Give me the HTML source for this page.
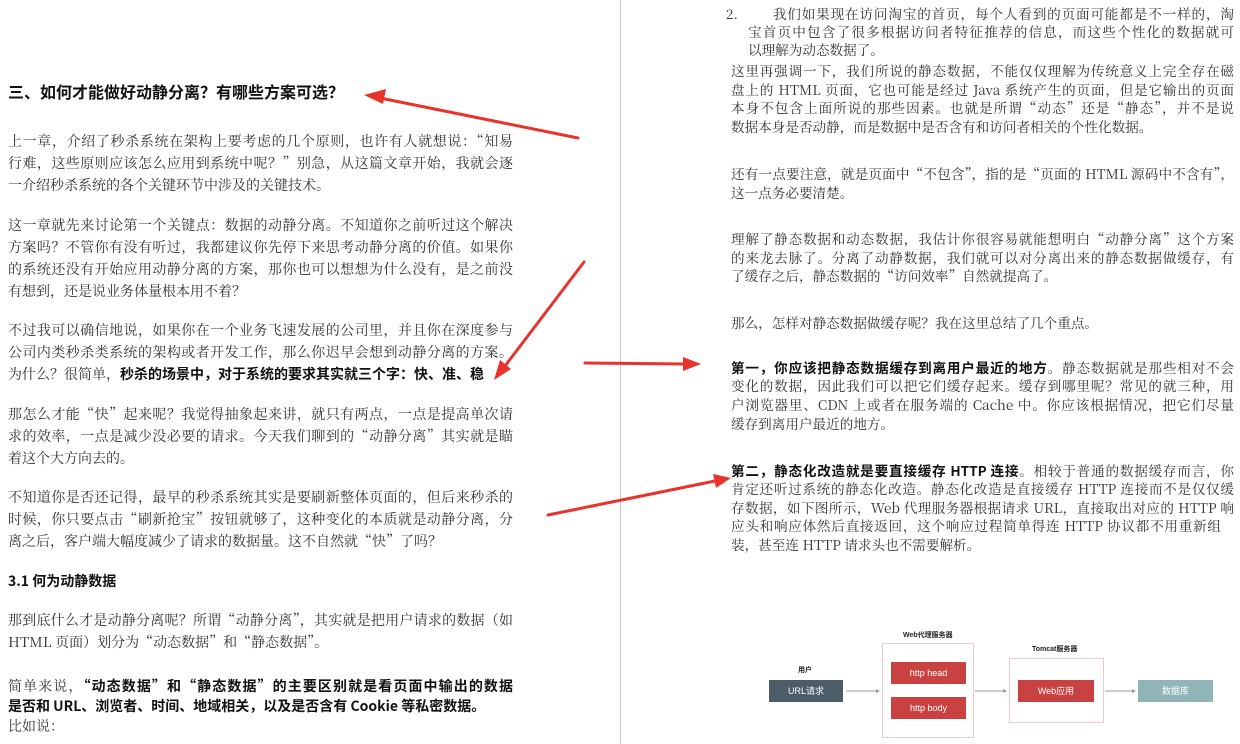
<!DOCTYPE html>
<html><head><meta charset="utf-8"><style>
body{margin:0;width:1240px;height:744px;background:#fff;position:relative;overflow:hidden;font-family:"Noto Serif CJK SC","Liberation Serif",serif;color:#333;}
.l{position:absolute;left:8px;width:505px;font-size:14px;line-height:20px;white-space:nowrap;margin-top:-2px;}
.j{text-align:justify;text-align-last:justify;}
.r{position:absolute;left:731px;width:503px;font-size:13.6px;line-height:18px;white-space:nowrap;margin-top:-2px;}
b{color:#111;font-family:"Noto Sans CJK SC","Liberation Sans",sans-serif;}
.box{position:absolute;font-family:"Liberation Sans","Noto Sans CJK SC",sans-serif;font-size:9px;color:#fff;text-align:center;line-height:22px;}
.lab{position:absolute;font-family:"Liberation Sans","Noto Sans CJK SC",sans-serif;font-size:7px;color:#222;font-weight:bold;}
</style></head><body>
<div style="position:absolute;left:620px;top:0;width:1px;height:744px;background:#c8c8c8"></div>

<div class="l" style="top:82px;font-size:16px;line-height:22px"><b>三、如何才能做好动静分离？有哪些方案可选？</b></div>
<div class="l j" style="top:133px">上一章，介绍了秒杀系统在架构上要考虑的几个原则，也许有人就想说：“知易</div>
<div class="l j" style="top:155px">行难，这些原则应该怎么应用到系统中呢？”别急，从这篇文章开始，我就会逐</div>
<div class="l" style="top:177px">一介绍秒杀系统的各个关键环节中涉及的关键技术。</div>
<div class="l j" style="top:217px">这一章就先来讨论第一个关键点：数据的动静分离。不知道你之前听过这个解决</div>
<div class="l j" style="top:239px">方案吗？不管你有没有听过，我都建议你先停下来思考动静分离的价值。如果你</div>
<div class="l j" style="top:261px">的系统还没有开始应用动静分离的方案，那你也可以想想为什么没有，是之前没</div>
<div class="l" style="top:283px">有想到，还是说业务体量根本用不着？</div>
<div class="l j" style="top:322px">不过我可以确信地说，如果你在一个业务飞速发展的公司里，并且你在深度参与</div>
<div class="l j" style="top:344px">公司内类秒杀类系统的架构或者开发工作，那么你迟早会想到动静分离的方案。</div>
<div class="l" style="top:366px">为什么？很简单，<b>秒杀的场景中，对于系统的要求其实就三个字：快、准、稳</b></div>
<div class="l j" style="top:406px">那怎么才能“快”起来呢？我觉得抽象起来讲，就只有两点，一点是提高单次请</div>
<div class="l j" style="top:428px">求的效率，一点是减少没必要的请求。今天我们聊到的“动静分离”其实就是瞄</div>
<div class="l" style="top:450px">着这个大方向去的。</div>
<div class="l j" style="top:489px">不知道你是否还记得，最早的秒杀系统其实是要刷新整体页面的，但后来秒杀的</div>
<div class="l j" style="top:511px">时候，你只要点击“刷新抢宝”按钮就够了，这种变化的本质就是动静分离，分</div>
<div class="l" style="top:533px">离之后，客户端大幅度减少了请求的数据量。这不自然就“快”了吗？</div>
<div class="l" style="top:573px"><b>3.1 何为动静数据</b></div>
<div class="l j" style="top:612px">那到底什么才是动静分离呢？所谓“动静分离”，其实就是把用户请求的数据（如</div>
<div class="l" style="top:634px">HTML 页面）划分为“动态数据”和“静态数据”。</div>
<div class="l j" style="top:678px">简单来说，<b>“动态数据”和“静态数据”的主要区别就是看页面中输出的数据</b></div>
<div class="l" style="top:698px"><b>是否和 URL、浏览者、时间、地域相关，以及是否含有 Cookie 等私密数据。</b></div>
<div class="l" style="top:718px">比如说：</div>

<div class="r j" style="top:6px;left:726px;width:508px"><span style="display:inline-block;width:46px">2.</span>我们如果现在访问淘宝的首页，每个人看到的页面可能都是不一样的，淘</div>
<div class="r j" style="top:24px;left:748px;width:486px">宝首页中包含了很多根据访问者特征推荐的信息，而这些个性化的数据就可</div>
<div class="r" style="top:42px;left:748px">以理解为动态数据了。</div>
<div class="r j" style="top:63px">这里再强调一下，我们所说的静态数据，不能仅仅理解为传统意义上完全存在磁</div>
<div class="r j" style="top:82px">盘上的 HTML 页面，它也可能是经过 Java 系统产生的页面，但是它输出的页面</div>
<div class="r j" style="top:100px">本身不包含上面所说的那些因素。也就是所谓“动态”还是“静态”，并不是说</div>
<div class="r" style="top:119px">数据本身是否动静，而是数据中是否含有和访问者相关的个性化数据。</div>
<div class="r j" style="top:166px">还有一点要注意，就是页面中“不包含”，指的是“页面的 HTML 源码中不含有”，</div>
<div class="r" style="top:185px">这一点务必要清楚。</div>
<div class="r j" style="top:231px">理解了静态数据和动态数据，我估计你很容易就能想明白“动静分离”这个方案</div>
<div class="r j" style="top:250px">的来龙去脉了。分离了动静数据，我们就可以对分离出来的静态数据做缓存，有</div>
<div class="r" style="top:268px">了缓存之后，静态数据的“访问效率”自然就提高了。</div>
<div class="r" style="top:315px">那么，怎样对静态数据做缓存呢？我在这里总结了几个重点。</div>
<div class="r j" style="top:360px"><b>第一，你应该把静态数据缓存到离用户最近的地方</b>。静态数据就是那些相对不会</div>
<div class="r j" style="top:378px">变化的数据，因此我们可以把它们缓存起来。缓存到哪里呢？常见的就三种，用</div>
<div class="r j" style="top:397px">户浏览器里、CDN 上或者在服务端的 Cache 中。你应该根据情况，把它们尽量</div>
<div class="r" style="top:416px">缓存到离用户最近的地方。</div>
<div class="r j" style="top:463px"><b>第二，静态化改造就是要直接缓存 HTTP 连接</b>。相较于普通的数据缓存而言，你</div>
<div class="r j" style="top:481px">肯定还听过系统的静态化改造。静态化改造是直接缓存 HTTP 连接而不是仅仅缓</div>
<div class="r j" style="top:500px">存数据，如下图所示，Web 代理服务器根据请求 URL，直接取出对应的 HTTP 响</div>
<div class="r j" style="top:518px;width:490px">应头和响应体然后直接返回，这个响应过程简单得连 HTTP 协议都不用重新组</div>
<div class="r" style="top:537px">装，甚至连 HTTP 请求头也不需要解析。</div>

<div class="lab" style="left:798px;top:665px">用户</div>
<div class="box" style="left:769px;top:680px;width:74px;height:22px;background:#4a5d68">URL请求</div>
<div class="lab" style="left:903px;top:630px">Web代理服务器</div>
<div style="position:absolute;left:882px;top:643px;width:90px;height:93px;border:1px solid #efcaca"></div>
<div class="box" style="left:891px;top:662px;width:75px;height:22px;background:#c94141">http head</div>
<div class="box" style="left:891px;top:697px;width:75px;height:22px;background:#c94141">http body</div>
<div class="lab" style="left:1032px;top:644px">Tomcat服务器</div>
<div style="position:absolute;left:1009px;top:658px;width:93px;height:63px;border:1px solid #efcaca"></div>
<div class="box" style="left:1018px;top:680px;width:76px;height:22px;background:#c94141">Web应用</div>
<div class="box" style="left:1138px;top:680px;width:75px;height:22px;background:#8fb5b8">数据库</div>

<svg width="1240" height="744" style="position:absolute;left:0;top:0" fill="none">
<g stroke="#999" stroke-width="1">
<line x1="846" y1="691" x2="878" y2="691"/><line x1="975" y1="691" x2="1005" y2="691"/><line x1="1105" y1="691" x2="1134" y2="691"/>
</g>
<g fill="#999"><path d="M880 691l-4-2v4z"/><path d="M1007 691l-4-2v4z"/><path d="M1136 691l-4-2v4z"/></g>
<g stroke="#e8322c" stroke-width="3" stroke-linecap="round">
<line x1="578" y1="138" x2="380" y2="98"/>
<line x1="584" y1="262" x2="505" y2="366"/>
<line x1="585" y1="363" x2="685" y2="364"/>
<line x1="548" y1="515" x2="715" y2="481"/>
</g>
<g fill="#e8322c">
<path d="M364 95l22-6-3 15z"/>
<path d="M494 380l6-20 11 9z"/>
<path d="M701 364l-18-7v14z"/>
<path d="M731 478l-18-4 3 14z"/>
</g>
</svg>
</body></html>
